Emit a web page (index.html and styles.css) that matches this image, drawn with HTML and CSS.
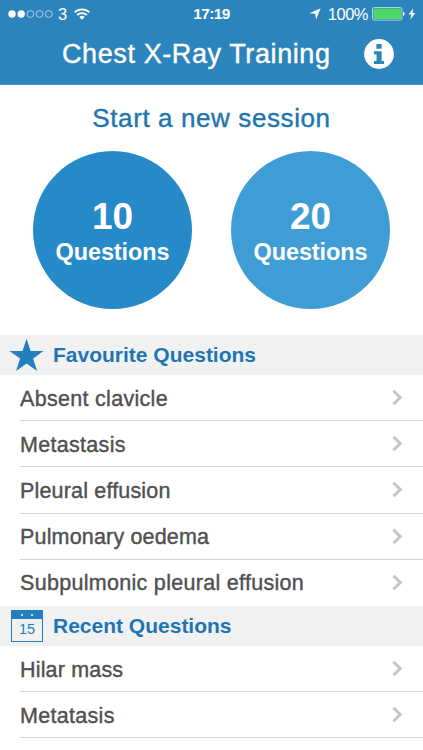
FILE: index.html
```html
<!DOCTYPE html>
<html lang="en">
<head>
<meta charset="utf-8">
<title>Chest X-Ray Training</title>
<link rel="stylesheet" href="styles.css">
</head>
<body>
<header class="top">
  <div class="status">
    <div class="status-left">
      <svg class="signal" width="45" height="8" viewBox="0 0 45 8"><g fill="#fff"><circle cx="4" cy="4" r="3.7"/><circle cx="13.2" cy="4" r="3.7"/></g><g fill="none" stroke="#e4f1fa" stroke-width=".7"><circle cx="22.4" cy="4" r="3.4"/><circle cx="31.6" cy="4" r="3.4"/><circle cx="40.8" cy="4" r="3.4"/></g></svg>
      <span class="carrier">3</span>
      <svg class="wifi" width="16" height="12" viewBox="0 0 16 12" fill="none" stroke="#fff" stroke-width="1.8"><path d="M.7 4.3a10.4 10.4 0 0 1 14.6 0M3.2 7a6.9 6.9 0 0 1 9.6 0"/><path d="M5.3 9.1a3.9 3.9 0 0 1 5.4 0L8 11.8z" fill="#fff" stroke="none"/></svg>
    </div>
    <div class="clock">17:19</div>
    <div class="status-right">
      <svg width="12" height="12" viewBox="0 0 12 12"><path d="M11.6.3 7 11.8 6.2 5.8.3 5.2z" fill="#fff"/></svg>
      <span class="percent">100%</span>
      <svg class="battery" width="33" height="14" viewBox="0 0 33 14"><rect x=".5" y=".5" width="29.5" height="12.6" rx="1.6" fill="none" stroke="#cfe3f1" stroke-width=".8"/><rect x="1.5" y="1.5" width="27.5" height="10.6" rx=".6" fill="#4cd964"/><path d="M31 4.7q1.7.5 1.7 2.1T31 8.9z" fill="#fff"/></svg>
      <svg width="8" height="12" viewBox="0 0 8 12"><path d="M5.4.2.6 6.6h2.8L2.3 11.6 7.3 5H4.4z" fill="#fff"/></svg>
    </div>
  </div>
  <div class="nav">
    <h1>Chest X-Ray Training</h1>
    <svg class="info" width="30" height="30" viewBox="0 0 30 30"><circle cx="15" cy="15" r="14.9" fill="#fff"/><path d="M12.4 5.1h5.2v4.7h-5.2zM9.9 12.2h7.8v9.7h2.4v3H9.9v-3h2.6v-6.7H9.9z" fill="#2c84bd"/></svg>
  </div>
</header>
<section class="session">
  <h2>Start a new session</h2>
  <div class="choices">
    <div class="choice"><span class="count">10</span><span class="unit">Questions</span></div>
    <div class="choice light"><span class="count">20</span><span class="unit">Questions</span></div>
  </div>
</section>
<section>
  <div class="section-head">
    <svg class="section-icon" width="36" height="36" viewBox="0 0 36 36"><path d="M17.6 1.8l4 12.1h13l-10.5 7.7 4 12.5-10.5-7.7-10.5 7.7 4-12.5L.5 13.9h13z" fill="#2180bd"/></svg>
    <h3>Favourite Questions</h3>
  </div>
  <ul>
    <li><span>Absent clavicle</span><i class="chevron"></i></li>
    <li><span>Metastasis</span><i class="chevron"></i></li>
    <li><span class="snug">Pleural effusion</span><i class="chevron"></i></li>
    <li><span class="snug">Pulmonary oedema</span><i class="chevron"></i></li>
    <li><span>Subpulmonic pleural effusion</span><i class="chevron"></i></li>
  </ul>
</section>
<section>
  <div class="section-head">
    <div class="section-icon calendar"><div class="rings"><b></b><b></b></div><div class="day">15</div></div>
    <h3>Recent Questions</h3>
  </div>
  <ul class="open">
    <li><span class="snug">Hilar mass</span><i class="chevron"></i></li>
    <li><span>Metatasis</span><i class="chevron"></i></li>
  </ul>
</section>
</body>
</html>
```
FILE: styles.css
```css
* { box-sizing: border-box; }
html, body { height: 750px; overflow: hidden; }
body { margin: 0; background: #fff; color: #505050; font-family: "Liberation Sans", Arial, sans-serif; }
h1, h2, h3, ul { margin: 0; padding: 0; font-weight: 400; }
svg { display: block; flex: none; }

.top { height: 85px; background: #2c84bd; color: #fff; border-bottom: 1px solid #5296c4; }
.status { display: grid; grid-template-columns: 1fr auto 1fr; align-items: center; height: 27px; padding: 0 8px; font-size: 16.5px; line-height: 27px; }
.status-left, .status-right { display: flex; align-items: center; height: 27px; }
.carrier { margin-left: 5px; line-height: 28px; }
.wifi { margin-left: 7px; }
.clock { font-weight: 700; font-size: 15.5px; letter-spacing: -.6px; line-height: 28px; }
.status-right { justify-content: flex-end; margin-right: -1px; }
.percent { margin: 0 4px 0 7px; font-size: 16.5px; line-height: 27px; letter-spacing: -.5px; }
.battery { margin-right: 3px; }
.nav { display: flex; height: 54px; align-items: center; padding-left: 62px; }
h1 { width: 302px; font-size: 27px; line-height: 54px; letter-spacing: .6px; white-space: nowrap; -webkit-text-stroke: .4px #fff; }

.session { height: 250px; }
h2 { padding-top: 18px; text-align: center; font-size: 26px; line-height: 30px; letter-spacing: .6px; color: #1d76b0; -webkit-text-stroke: .4px #1d76b0; }
.choices { display: flex; gap: 39px; padding: 18px 0 0 33px; }
.choice { display: flex; flex-direction: column; align-items: center; width: 159px; height: 158px; padding-top: 44px; border-radius: 50%; background: #268ac9; color: #fff; font-weight: 700; }
.light { background: #3f9dd6; }
.count { font-size: 37px; line-height: 44px; }
.unit { font-size: 23.5px; line-height: 26px; letter-spacing: -.1px; }

.section-head { display: flex; align-items: center; height: 40px; padding-left: 9px; background: #f1f1f1; }
.section-icon { flex: none; width: 36px; margin-right: 8px; }
h3 { font-size: 21px; line-height: 40px; font-weight: 700; color: #1d76b3; white-space: nowrap; }
ul { list-style: none; padding-left: 20px; }
li { display: flex; align-items: center; justify-content: space-between; height: 46.2px; padding-right: 23px; border-bottom: 1px solid #d3d3d3; font-size: 21.5px; letter-spacing: .3px; white-space: nowrap; -webkit-text-stroke: .4px #505050; }
li span { padding-top: 3px; }
.snug { letter-spacing: .17px; }
li:last-child { border-bottom-color: transparent; }
.open li:last-child { border-bottom-color: #d3d3d3; }
.chevron { width: 11px; height: 11px; border: solid #c4c4c9; border-width: 3px 3px 0 0; transform: rotate(45deg); }
.calendar { width: 32px; height: 32px; margin: 0 10px 0 2px; border: 1px solid #2180bd; color: #2180bd; }
.rings { display: flex; justify-content: center; gap: 8px; height: 8px; padding-top: 3px; background: #2180bd; }
.rings b { width: 2px; height: 2px; border-radius: 50%; background: #fff; }
.day { text-align: center; font-size: 14.5px; line-height: 20px; }
```
